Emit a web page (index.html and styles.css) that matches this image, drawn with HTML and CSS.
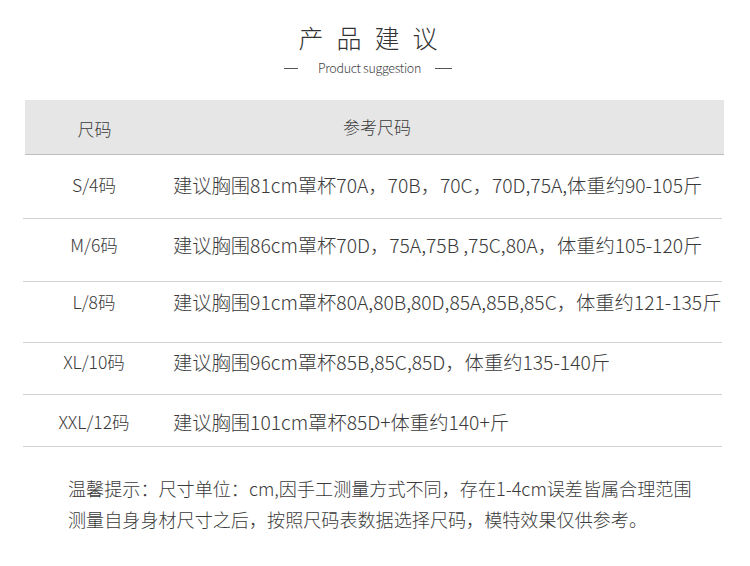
FILE: index.html
```html
<!DOCTYPE html>
<html lang="zh-CN">
<head>
<meta charset="utf-8">
<title>产品建议</title>
<link rel="stylesheet" href="styles.css">
</head>
<body>
<div class="page">
  <header class="head">
    <h1 class="title">产品建议</h1>
    <div class="sub"><span class="dash dash-l"></span><span class="sub-text">Product suggestion</span><span class="dash dash-r"></span></div>
  </header>
  <section class="table">
    <div class="thead">
      <div class="c-size">尺码</div>
      <div class="c-ref">参考尺码</div>
    </div>
    <div class="row r1"><div class="c-size">S/4码</div><div class="c-desc">建议胸围81cm罩杯70A，70B，70C，70D,75A,体重约90-105斤</div></div>
    <div class="row r2"><div class="c-size">M/6码</div><div class="c-desc">建议胸围86cm罩杯70D，75A,75B ,75C,80A，体重约105-120斤</div></div>
    <div class="row r3"><div class="c-size">L/8码</div><div class="c-desc">建议胸围91cm罩杯80A,80B,80D,85A,85B,85C，体重约121-135斤</div></div>
    <div class="row r4"><div class="c-size">XL/10码</div><div class="c-desc">建议胸围96cm罩杯85B,85C,85D，体重约135-140斤</div></div>
    <div class="row r5"><div class="c-size">XXL/12码</div><div class="c-desc">建议胸围101cm罩杯85D+体重约140+斤</div></div>
  </section>
  <footer class="note">
    <p>温馨提示：尺寸单位：cm,因手工测量方式不同，存在1-4cm误差皆属合理范围</p>
    <p>测量自身身材尺寸之后，按照尺码表数据选择尺码，模特效果仅供参考。</p>
  </footer>
</div>
</body>
</html>
```
FILE: styles.css
```css
* { box-sizing: border-box; }
html, body { margin: 0; padding: 0; background: #fff; }
body {
  font-family: "Noto Sans CJK SC", "Noto Sans", sans-serif;
  font-weight: 300;
  color: #3a3a3a;
  width: 750px;
  height: 566px;
  overflow: hidden;
}
.page { display: flex; flex-direction: column; }
.head { display: flex; flex-direction: column; align-items: center; padding: 21px 14px 0 0; }
.title {
  margin: 0 -13px 0 0;
  font-size: 25px;
  font-weight: 300;
  line-height: 32px;
  letter-spacing: 13px;
  color: #333;
}
.sub { display: flex; align-items: center; margin-top: 7px; height: 16px; }
.sub-text { font-size: 12.5px; line-height: 16px; color: #444; letter-spacing: -0.3px; }
.dash { height: 1px; background: #555; }
.dash-l { width: 14px; margin-right: 20px; }
.dash-r { width: 17px; margin-left: 14px; }
.table { margin: 24px 28px 0 23px; display: flex; flex-direction: column; }
.thead {
  display: flex;
  align-items: center;
  height: 55px;
  margin: 0 -2px 0 2px;
  background: #e6e6e6;
  border-bottom: 1px solid #bdbdbd;
  font-size: 17px;
}
.thead .c-size { width: 139px; flex-shrink: 0; text-align: center; padding-top: 2px; }
.thead .c-ref { padding-left: 179px; padding-bottom: 2px; }
.row { display: flex; align-items: flex-start; border-bottom: 1px solid #d2d2d2; font-size: 17.5px; line-height: 24px; }
.row .c-size { width: 142px; flex-shrink: 0; text-align: center; }
.row .c-desc { padding-left: 8px; white-space: nowrap; font-size: 19.3px; }
.r1 { height: 64px; padding-top: 18px; }
.r2 { height: 63px; padding-top: 14px; }
.r3 { height: 61px; padding-top: 8px; }
.r4 { height: 52px; padding-top: 7px; }
.r5 { height: 52px; padding-top: 15px; }
.note { padding: 26px 0 0 68px; font-size: 18.1px; }
.note p { margin: 0; line-height: 31px; white-space: nowrap; }
```
